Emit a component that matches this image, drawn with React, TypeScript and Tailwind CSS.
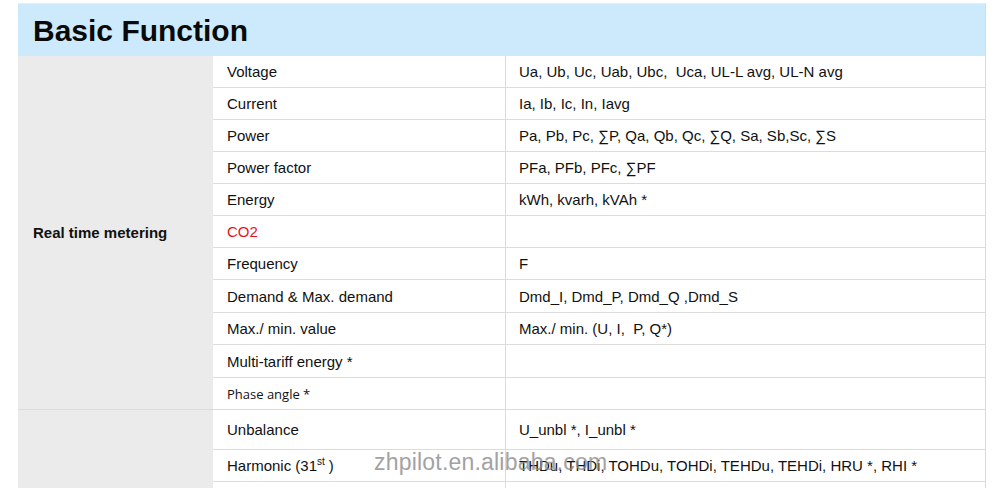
import React from "react";

type Row = { label: React.ReactNode; value: React.ReactNode; h: string; small?: boolean; red?: boolean };

const group1: Row[] = [
  { label: "Voltage", value: "Ua, Ub, Uc, Uab, Ubc,  Uca, UL-L avg, UL-N avg", h: "h-[32px]" },
  { label: "Current", value: "Ia, Ib, Ic, In, Iavg", h: "h-[32px]" },
  { label: "Power", value: "Pa, Pb, Pc, ∑P, Qa, Qb, Qc, ∑Q, Sa, Sb,Sc, ∑S", h: "h-[32px]" },
  { label: "Power factor", value: "PFa, PFb, PFc, ∑PF", h: "h-[32px]" },
  { label: "Energy", value: "kWh, kvarh, kVAh *", h: "h-[32px]" },
  { label: "CO2", value: "", h: "h-[32px]", red: true },
  { label: "Frequency", value: "F", h: "h-[32px]" },
  { label: "Demand & Max. demand", value: "Dmd_I, Dmd_P, Dmd_Q ,Dmd_S", h: "h-[33px]" },
  { label: "Max./ min. value", value: "Max./ min. (U, I,  P, Q*)", h: "h-[32px]" },
  { label: "Multi-tariff energy *", value: "", h: "h-[33px]" },
  { label: "Phase angle *", value: "", h: "h-[32px]", small: true },
];

const group2: Row[] = [
  { label: "Unbalance", value: "U_unbl *, I_unbl *", h: "h-[40px]" },
  {
    label: (
      <>
        Harmonic (31<sup className="text-[10px] align-[5px]">st</sup>
        <span className="ml-[4px]">)</span>
      </>
    ),
    value: "THDu, THDi, TOHDu, TOHDi, TEHDu, TEHDi, HRU *, RHI *",
    h: "h-[32px]",
  },
  { label: "", value: "", h: "h-[32px]" },
];

function Rows({ rows }: { rows: Row[] }) {
  return (
    <div className="flex flex-col flex-1">
      {rows.map((r, i) => (
        <div key={i} className={`flex ${r.h} border-b border-[#dcdcdc]`}>
          <div
            className={`w-[293px] shrink-0 flex items-center pl-[14px] pt-[2px] border-r border-[#dcdcdc] ${
              r.small ? "text-[13px] font-['Open_Sans',sans-serif]" : "text-[15px]"
            } ${r.red ? "text-[#e8141b]" : "text-[#111]"}`}
          >
            {r.label}
          </div>
          <div className="flex-1 flex items-center pl-[13px] pt-[2px] text-[15px] text-[#111] whitespace-pre">
            {r.value}
          </div>
        </div>
      ))}
    </div>
  );
}

export default function App() {
  return (
    <div className="w-[997px] h-[488px] overflow-hidden bg-white font-['Liberation_Sans',Arial,sans-serif] relative">
      <div className="pl-[18px] pt-[3px]">
        <div className="w-[968px] border-r border-[#dcdcdc]">
          <div className="h-[53px] bg-[#cdeafc] border-t border-[#e6eef3] flex items-center pl-[15px] pt-[2px]">
            <span className="text-[30px] font-bold text-[#0a0a0a] leading-none">Basic Function</span>
          </div>
          <div className="flex">
            <div className="w-[195px] shrink-0 bg-[#ebebeb] border-b border-[#dcdcdc] flex items-center pl-[15px] pt-[2px]">
              <span className="text-[15px] font-bold text-[#111]">Real time metering</span>
            </div>
            <Rows rows={group1} />
          </div>
          <div className="flex">
            <div className="w-[195px] shrink-0 bg-[#ebebeb]" />
            <Rows rows={group2} />
          </div>
        </div>
      </div>
      <div className="absolute left-[374px] top-[451px] text-[23px] text-[#8c8c8c] opacity-80 leading-none tracking-[0.2px]">
        zhpilot.en.alibaba.com
      </div>
    </div>
  );
}
